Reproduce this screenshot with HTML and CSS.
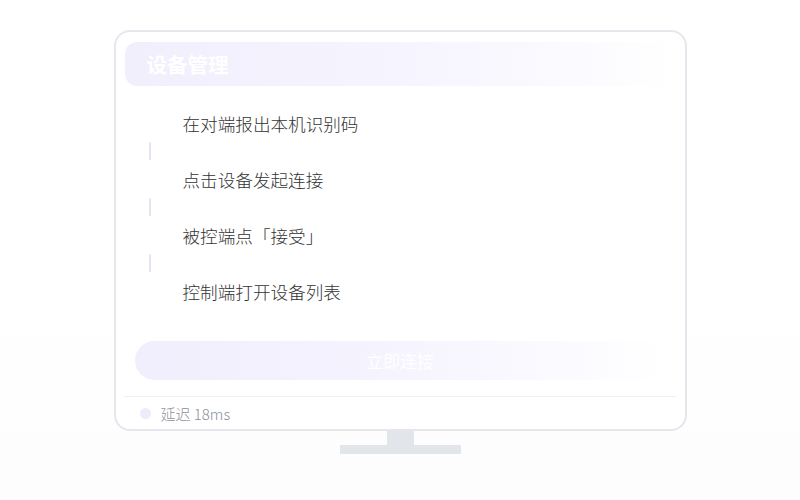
FILE: index.html
```html
<!DOCTYPE html>
<html lang="zh">
<head>
<meta charset="utf-8">
<title>设备管理</title>
<link rel="stylesheet" href="styles.css">
</head>
<body>
<div class="stage">
  <div class="monitor">
    <div class="screen">
      <div class="header"><span class="title">设备管理</span></div>
      <div class="steps">
        <div class="step">在对端报出本机识别码</div>
        <div class="connector"></div>
        <div class="step">点击设备发起连接</div>
        <div class="connector"></div>
        <div class="step">被控端点「接受」</div>
        <div class="connector"></div>
        <div class="step">控制端打开设备列表</div>
      </div>
      <div class="btn-wrap"><div class="btn">立即连接</div></div>
      <div class="divider"></div>
      <div class="footer"><span class="dot"></span><span class="latency">延迟 18ms</span></div>
    </div>
  </div>
  <div class="neck"></div>
  <div class="base"></div>
</div>
</body>
</html>
```
FILE: styles.css
```css
* { box-sizing: border-box; }
html, body { margin: 0; padding: 0; }
body {
  width: 800px;
  height: 500px;
  overflow: hidden;
  background: linear-gradient(#ffffff 0, #ffffff 55%, #fdfdfe 100%);
  font-family: "Noto Sans CJK SC", "Noto Sans", sans-serif;
}
.stage {
  display: flex;
  flex-direction: column;
  align-items: center;
  padding-top: 30px;
}
.monitor {
  width: 573px;
  height: 401px;
  border: 2px solid #e6e7ec;
  border-radius: 16px;
  background: #fff;
  padding: 10px 9px 0 9px;
}
.screen {
  display: flex;
  flex-direction: column;
}
.header {
  height: 44px;
  border-radius: 12px;
  background: linear-gradient(90deg, #f2effd 0%, #f6f4fe 50%, #fbfaff 80%, #ffffff 100%);
  display: flex;
  align-items: center;
  padding-left: 22px;
}
.title {
  color: #fff;
  font-size: 20.5px;
  font-weight: 700;
  line-height: 1;
}
.steps {
  display: flex;
  flex-direction: column;
  margin-top: 26px;
  padding-left: 24px;
}
.step {
  height: 24px;
  line-height: 24px;
  font-size: 17.6px;
  font-weight: 300;
  color: #333;
  padding-left: 34px;
  white-space: nowrap;
}
.connector {
  width: 2px;
  height: 18px;
  margin: 6px 0 8px 0;
  background: #e6e4f1;
  border-radius: 1px;
}
.btn-wrap {
  padding: 0 10px;
  margin-top: 37px;
}
.btn {
  height: 39px;
  border-radius: 20px;
  background: linear-gradient(90deg, #f1eefd 0%, #f5f3fe 45%, #fbfaff 80%, #ffffff 100%);
  color: #fff;
  font-size: 17px;
  display: flex;
  align-items: center;
  justify-content: center;
}
.divider {
  height: 1px;
  background: #f0f0f4;
  margin-top: 16px;
  margin-left: -1px;
}
.footer {
  height: 32px;
  display: flex;
  align-items: center;
  padding-left: 15px;
}
.dot {
  width: 11px;
  height: 11px;
  border-radius: 50%;
  background: #eeebfb;
  margin-right: 10px;
}
.latency {
  font-size: 15px;
  font-weight: 300;
  color: #8c909a;
}
.neck {
  width: 27px;
  height: 14px;
  background: #e2e5e9;
}
.base {
  width: 121px;
  height: 9px;
  background: #e2e5e9;
}
```
